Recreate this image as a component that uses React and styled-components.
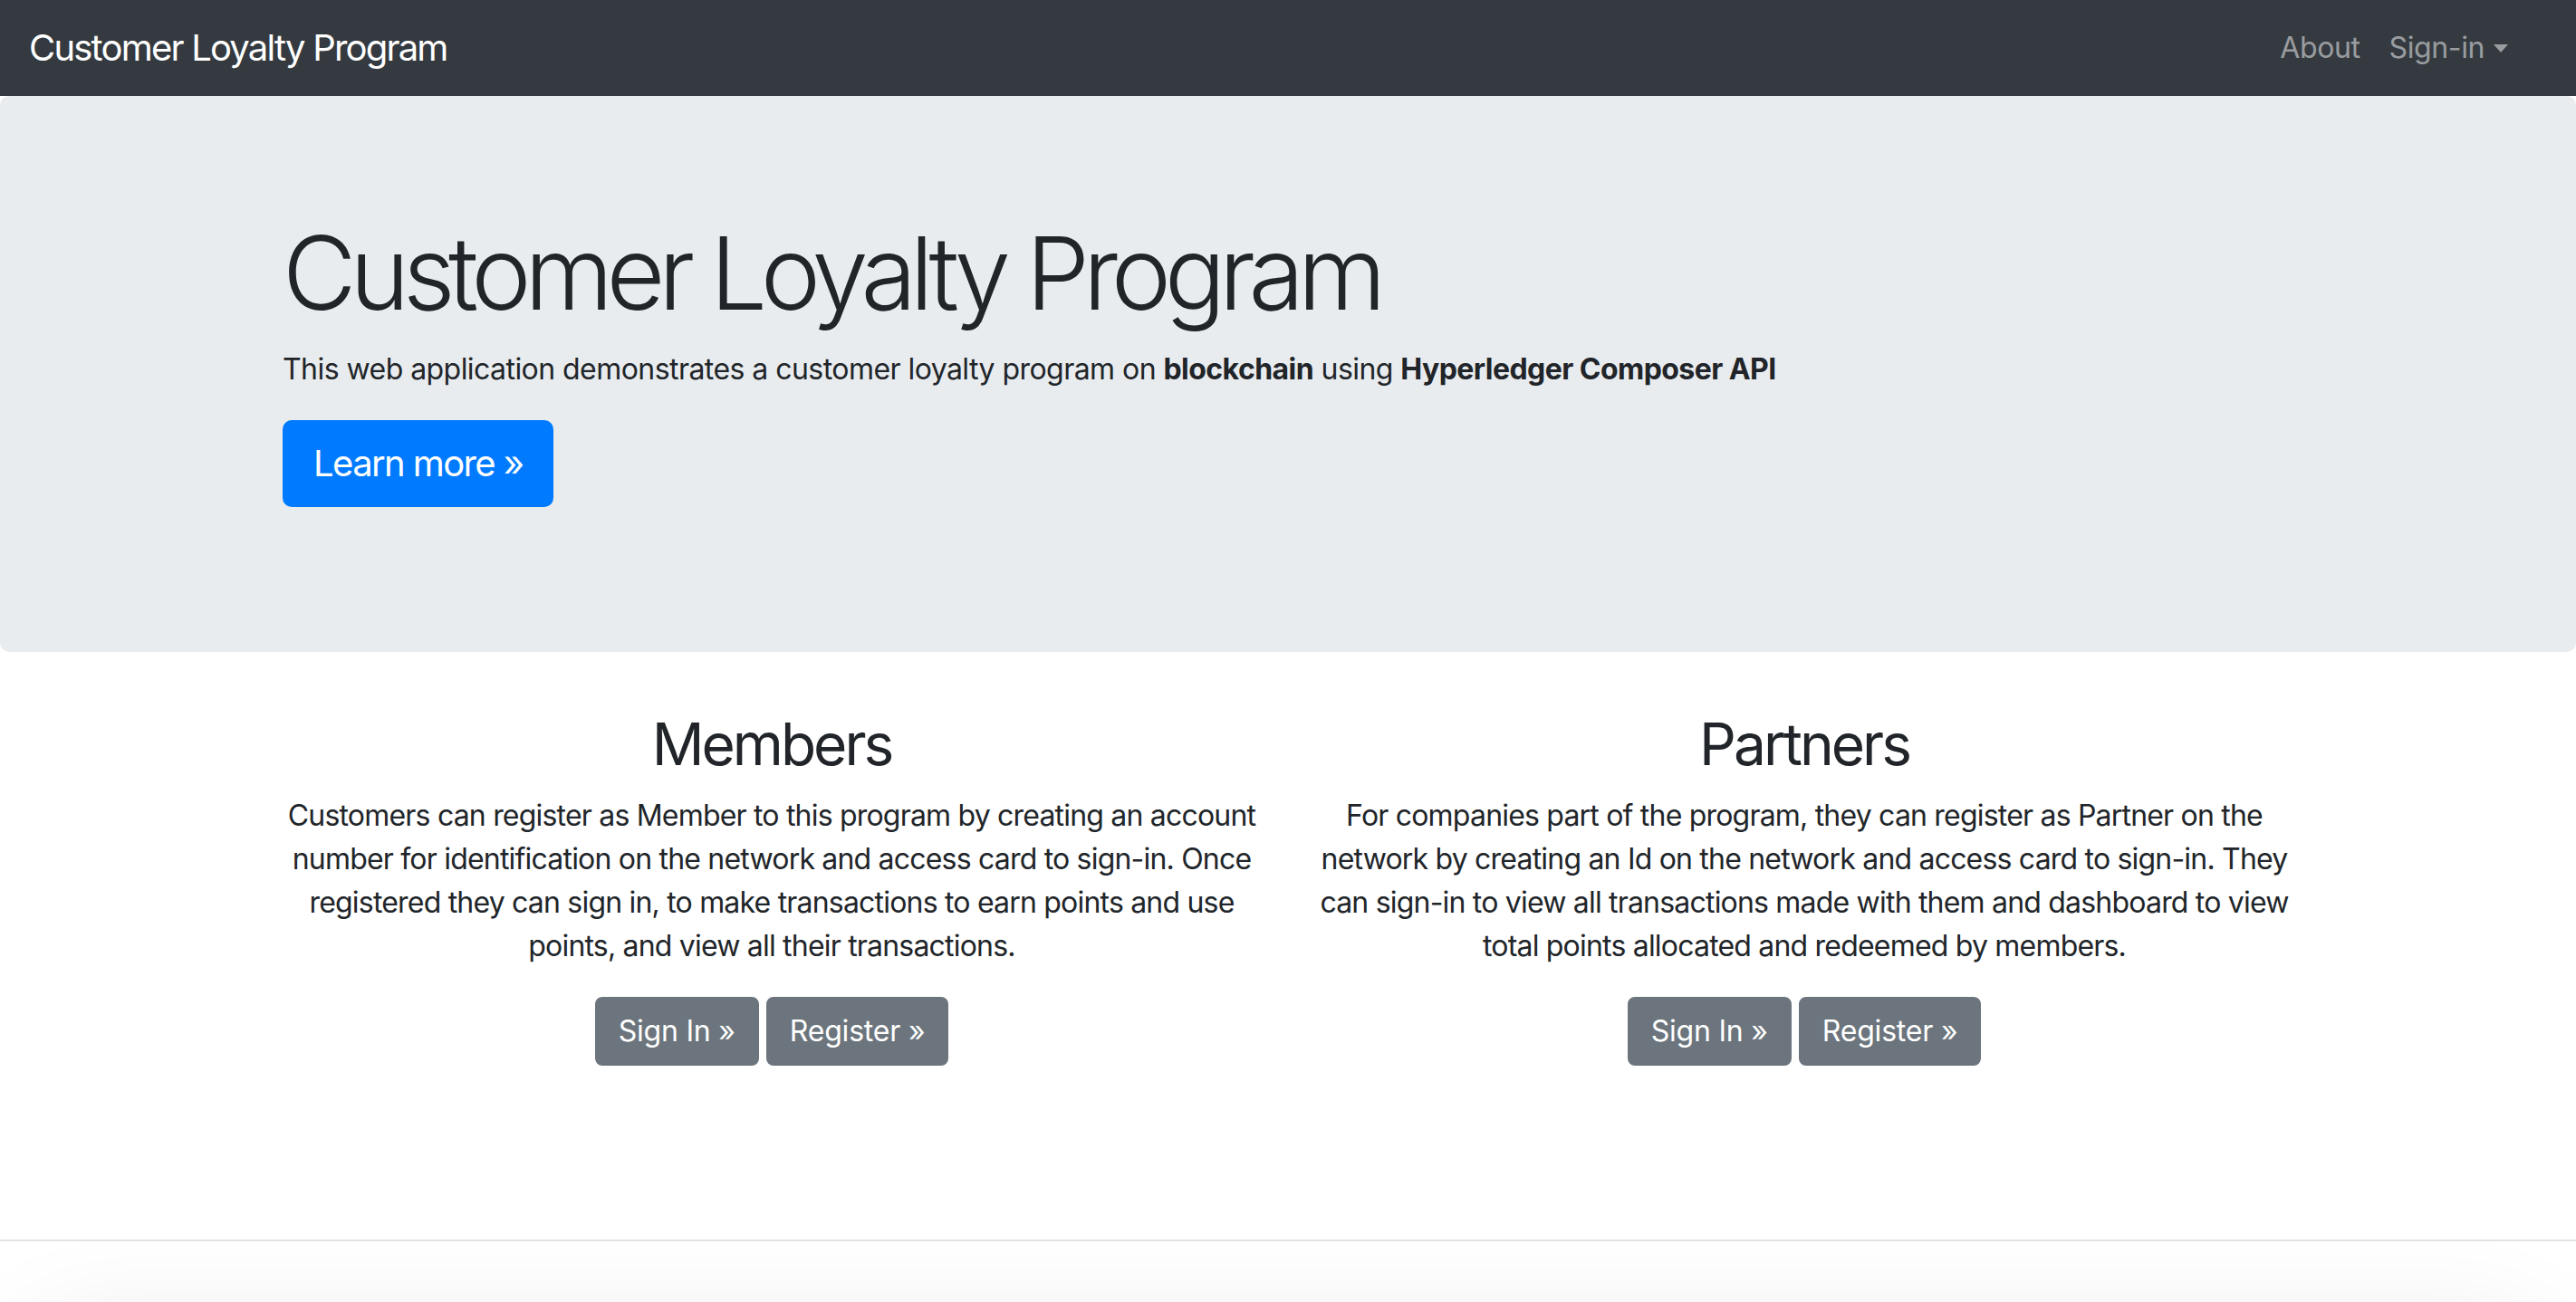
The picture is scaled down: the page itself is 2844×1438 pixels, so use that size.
import React from 'react';
import styled, { createGlobalStyle } from 'styled-components';

const GlobalStyle = createGlobalStyle`
  body {
    margin: 0;
    font-family: Inter, "Liberation Sans", sans-serif;
    color: #212529;
    background: #fff;
  }
`;

const Navbar = styled.nav`
  height: 106px;
  background: #343a40;
  display: flex;
  align-items: center;
  justify-content: space-between;
  padding: 0 59px 0 32px;
  box-sizing: border-box;
`;

const Brand = styled.a`
  font-size: 40px;
  line-height: 60px;
  letter-spacing: -1.8px;
  color: #fff;
  text-decoration: none;
`;

const NavList = styled.ul`
  display: flex;
  list-style: none;
  margin: 0;
  padding: 0;
`;

const NavLink = styled.a`
  display: flex;
  align-items: center;
  padding: 0 16px;
  font-size: 32px;
  line-height: 48px;
  letter-spacing: -0.4px;
  color: rgba(255, 255, 255, 0.5);
  text-decoration: none;
`;

const Caret = styled.span`
  display: inline-block;
  margin-left: 10px;
  border-top: 9px solid rgba(255, 255, 255, 0.5);
  border-left: 8.5px solid transparent;
  border-right: 8.5px solid transparent;
`;

const Jumbotron = styled.header`
  background: #e9ecef;
  border-radius: 10px;
  padding: 128px 0;
  margin-bottom: 64px;
`;

const Container = styled.div`
  width: 2220px;
  margin: 0 auto;
`;

const Title = styled.h1`
  font-size: 112px;
  font-weight: 300;
  line-height: 1.2;
  letter-spacing: -7.4px;
  margin: 0 0 16px;
`;

const Text = styled.p`
  font-size: 32px;
  line-height: 48px;
  letter-spacing: -0.55px;
  margin: 0 0 32px;
`;

const Description = styled(Text)`
  letter-spacing: -0.8px;
`;

const Button = styled.a`
  display: inline-block;
  color: #fff;
  text-decoration: none;
  background: ${p => (p.$primary ? '#007bff' : '#6c757d')};
  border: 2px solid ${p => (p.$primary ? '#007bff' : '#6c757d')};
  font-size: ${p => (p.$large ? '40px' : '32px')};
  line-height: ${p => (p.$large ? '60px' : '48px')};
  letter-spacing: ${p => (p.$large ? '-1.6px' : '-0.2px')};
  padding: ${p => (p.$large ? '16px 32px' : '12px 24px')};
  border-radius: ${p => (p.$large ? '10px' : '8px')};
`;

const Row = styled.section`
  display: grid;
  grid-template-columns: 1fr 1fr;
  column-gap: 60px;
`;

const Column = styled.div`
  text-align: center;
`;

const Heading = styled.h2`
  font-size: 64px;
  font-weight: 400;
  line-height: 1.2;
  letter-spacing: -3px;
  margin: 0 0 16px;
`;

const Actions = styled.p`
  display: flex;
  justify-content: center;
  gap: 8px;
  margin: 0 0 32px;
`;

const Rule = styled.hr`
  margin: 160px 0 0;
  border: 0;
  border-top: 2px solid #e3e3e3;
`;

const Footer = styled.footer`
  margin: 100px 40px 0;
  height: 200px;
  background: #f4f4f4;
  box-shadow: 0 0 120px rgba(0, 0, 0, 0.1);
  border-radius: 40px;
`;

const sections = [
  {
    title: 'Members',
    text: 'Customers can register as Member to this program by creating an account number for identification on the network and access card to sign-in. Once registered they can sign in, to make transactions to earn points and use points, and view all their transactions.',
  },
  {
    title: 'Partners',
    text: 'For companies part of the program, they can register as Partner on the network by creating an Id on the network and access card to sign-in. They can sign-in to view all transactions made with them and dashboard to view total points allocated and redeemed by members.',
  },
];

const App = () => (
  <>
    <GlobalStyle />
    <Navbar>
      <Brand href="#">Customer Loyalty Program</Brand>
      <NavList>
        <li><NavLink href="#">About</NavLink></li>
        <li><NavLink href="#">Sign-in<Caret /></NavLink></li>
      </NavList>
    </Navbar>
    <Jumbotron>
      <Container>
        <Title>Customer Loyalty Program</Title>
        <Text>
          This web application demonstrates a customer loyalty program on <b>blockchain</b> using <b>Hyperledger Composer API</b>
        </Text>
        <Text>
          <Button $primary $large href="#">Learn more »</Button>
        </Text>
      </Container>
    </Jumbotron>
    <Container>
      <Row>
        {sections.map(s => (
          <Column key={s.title}>
            <Heading>{s.title}</Heading>
            <Description>{s.text}</Description>
            <Actions>
              <Button href="#">Sign In »</Button>
              <Button href="#">Register »</Button>
            </Actions>
          </Column>
        ))}
      </Row>
    </Container>
    <Rule />
    <Footer />
  </>
);

export default App;
